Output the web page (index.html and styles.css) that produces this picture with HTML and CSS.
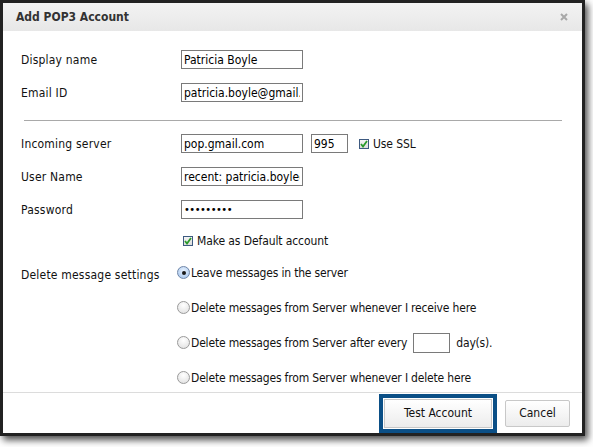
FILE: index.html
```html
<!DOCTYPE html>
<html>
<head>
<meta charset="utf-8">
<link rel="stylesheet" href="styles.css">
</head>
<body>
<div class="dialog">
  <div class="header">
    <span class="title">Add POP3 Account</span>
    <svg class="close" width="8" height="8" viewBox="0 0 8 8"><path d="M1 1L7 7M7 1L1 7" stroke="#a8a8a8" stroke-width="2"/></svg>
  </div>
  <div class="content">
    <div class="row r33">
      <label class="lbl">Display name</label>
      <div class="field"><input class="txt" type="text" value="Patricia Boyle"></div>
    </div>
    <div class="row r33">
      <label class="lbl">Email ID</label>
      <div class="field"><input class="txt" type="text" value="patricia.boyle@gmail.com"></div>
    </div>
    <div class="sep"></div>
    <div class="row r33">
      <label class="lbl">Incoming server</label>
      <div class="field">
        <input class="txt" type="text" value="pop.gmail.com">
        <input class="txt port" type="text" value="995">
        <span class="cb ssl"><svg width="8" height="8" viewBox="0 0 8 8"><path d="M1 4L3 6.5L7 1" fill="none" stroke="#2a9a2a" stroke-width="1.8"/></svg></span>
        <span class="cbtext">Use SSL</span>
      </div>
    </div>
    <div class="row r33">
      <label class="lbl">User Name</label>
      <div class="field"><input class="txt" type="text" value="recent: patricia.boyle@gmail.com"></div>
    </div>
    <div class="row r33">
      <label class="lbl">Password</label>
      <div class="field"><input class="txt pw" type="password" value="123456789"></div>
    </div>
    <div class="row r30">
      <span class="lbl"></span>
      <div class="field">
        <span class="cb def"><svg width="8" height="8" viewBox="0 0 8 8"><path d="M1 4L3 6.5L7 1" fill="none" stroke="#2a9a2a" stroke-width="1.8"/></svg></span>
        <span class="cbtext">Make as Default account</span>
      </div>
    </div>
    <div class="row radios-row">
      <label class="lbl lbl-top">Delete message settings</label>
      <div class="radios">
        <div class="ropt"><span class="radio on"><span class="dot"></span></span><span>Leave messages in the server</span></div>
        <div class="ropt"><span class="radio"></span><span>Delete messages from Server whenever I receive here</span></div>
        <div class="ropt"><span class="radio"></span><span>Delete messages from Server after every</span><input class="txt days" type="text" value=""><span>day(s).</span></div>
        <div class="ropt"><span class="radio"></span><span>Delete messages from Server whenever I delete here</span></div>
      </div>
    </div>
  </div>
  <div class="footer">
    <button class="btn test">Test Account</button>
    <button class="btn cancel">Cancel</button>
  </div>
</div>
</body>
</html>
```

FILE: styles.css
```css
html, body {
  margin: 0;
  padding: 0;
  background: #ffffff;
}
body {
  min-height: 447px;
  font-family: "DejaVu Sans Condensed", "DejaVu Sans", sans-serif;
  font-size: 12px;
  letter-spacing: -0.1px;
  color: #111;
}
.dialog {
  width: 585px;
  height: 436px;
  box-sizing: border-box;
  border: 3px solid #222;
  background: #fff;
  box-shadow: 3px 4px 7px rgba(0, 0, 0, 0.7);
  display: flex;
  flex-direction: column;
}
.header {
  height: 28px;
  flex: none;
  background: linear-gradient(#f3f3f3, #e7e7e7);
  display: flex;
  align-items: center;
  justify-content: space-between;
  padding: 0 14px 0 13px;
}
.title {
  font-weight: bold;
  font-size: 12px;
  letter-spacing: 0;
  color: #333;
}
.close {
  display: block;
}
.content {
  flex: 1;
  padding: 12px 20px 0 18px;
  display: flex;
  flex-direction: column;
}
.row {
  display: flex;
  align-items: center;
}
.r33 { height: 33px; }
.r30 { height: 30px; }
.lbl {
  width: 160px;
  flex: none;
  letter-spacing: 0.2px;
}
.field {
  display: flex;
  align-items: center;
}
.txt {
  box-sizing: border-box;
  width: 122px;
  height: 19px;
  border: 1px solid #7a7a7a;
  padding: 0 2px;
  margin: 0;
  font-family: "DejaVu Sans Condensed", "DejaVu Sans", sans-serif;
  font-size: 12px;
  color: #000;
  background: #fff;
  outline: none;
}
.port {
  width: 37px;
  margin-left: 8px;
}
.pw {
  font-size: 11px;
  letter-spacing: -0.5px;
}
.cb {
  box-sizing: border-box;
  width: 10px;
  height: 10px;
  border: 1px solid #3d5a80;
  background: linear-gradient(#f4f4f4, #dcdcdc);
  display: flex;
  align-items: center;
  justify-content: center;
}
.cb svg { display: block; }
.ssl { margin-left: 11px; }
.def { margin-left: 2px; }
.cbtext { margin-left: 4px; }
.sep {
  height: 1px;
  background: #a9a9a9;
  margin: 11px 0 6px 3px;
}
.radios-row {
  align-items: flex-start;
}
.lbl-top {
  padding-top: 12px;
  line-height: 14px;
}
.radios {
  display: flex;
  flex-direction: column;
  gap: 14px;
  padding-top: 6px;
  margin-left: -4px;
  letter-spacing: -0.18px;
}
.ropt {
  height: 21px;
  display: flex;
  align-items: center;
}
.radio {
  box-sizing: border-box;
  width: 13px;
  height: 13px;
  border-radius: 50%;
  border: 1px solid #9a9a9a;
  background: radial-gradient(circle at 50% 30%, #ffffff, #dedede);
  margin-right: 1px;
  display: flex;
  align-items: center;
  justify-content: center;
  flex: none;
}
.radio.on {
  border-color: #6f86a8;
  background: radial-gradient(circle at 50% 35%, #e8f2ff, #9fc1ea);
}
.dot {
  width: 4px;
  height: 4px;
  border-radius: 50%;
  background: #1a1a1a;
}
.days {
  width: 37px;
  height: 20px;
  margin: 0 6px 0 6px;
}
.footer {
  height: 40px;
  flex: none;
  border-top: 1px solid #dcdcdc;
  display: flex;
  align-items: center;
  justify-content: flex-end;
  gap: 13px;
  padding-right: 12px;
}
.btn {
  box-sizing: border-box;
  height: 27px;
  border: 1px solid #c8c8c8;
  border-radius: 2px;
  background: linear-gradient(#ffffff, #ececec);
  font-family: "DejaVu Sans Condensed", "DejaVu Sans", sans-serif;
  font-size: 12px;
  color: #111;
  padding: 0;
  margin: 0;
}
.test {
  width: 108px;
  height: 29px;
  border-radius: 0;
  outline: 4px solid #0b4f86;
  outline-offset: 1px;
}
.cancel {
  width: 65px;
}
```
